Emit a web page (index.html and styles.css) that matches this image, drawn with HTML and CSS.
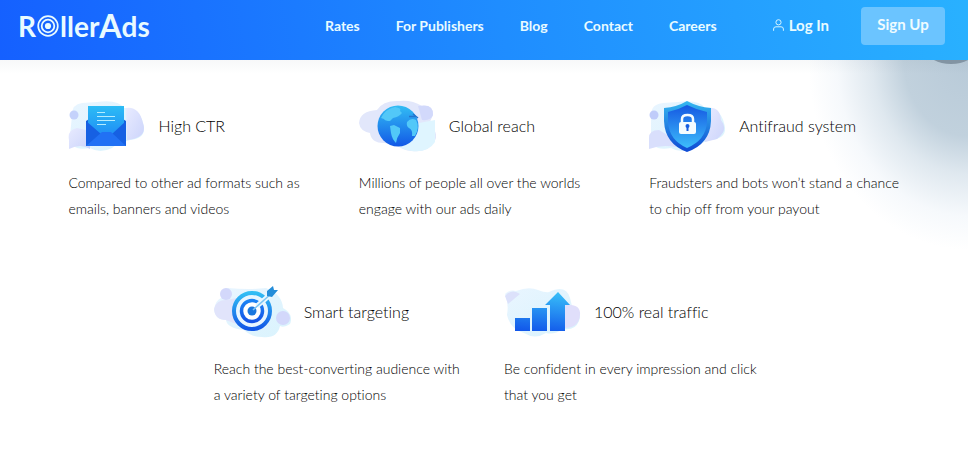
FILE: index.html
```html
<!DOCTYPE html>
<html lang="en">
<head>
<meta charset="utf-8">
<title>RollerAds</title>
<link rel="stylesheet" href="styles.css">
</head>
<body>
<header class="header">
  <a class="logo" href="#" aria-label="RollerAds">
    <span>R</span>
    <svg class="logo-mark" viewBox="0 0 22 22" aria-hidden="true">
      <g fill="none" stroke="#e9fbff"><circle cx="11" cy="11" r="9.8" stroke-width="1.7"/><circle cx="11" cy="11" r="6.3" stroke-width="1.8"/></g>
      <circle cx="11" cy="11" r="3.1" fill="#e9fbff"/>
    </svg>
    <span>ller</span><span class="logo-a">A</span><span>ds</span>
  </a>
  <nav class="nav">
    <a href="#">Rates</a>
    <a href="#">For Publishers</a>
    <a href="#">Blog</a>
    <a href="#">Contact</a>
    <a href="#">Careers</a>
  </nav>
  <div class="account">
    <a class="login" href="#">
      <svg class="user" viewBox="0 0 11 12" aria-hidden="true"><g fill="none" stroke="#d5f5ff" stroke-width="1"><circle cx="5.5" cy="3.3" r="2.6"/><path d="M.6 11.8V10Q.6 7.8 3 7.8H8Q10.4 7.8 10.4 10V11.8"/></g></svg>
      Log In
    </a>
    <button class="signup" type="button">Sign Up</button>
  </div>
</header>
<main class="main">
  <svg class="orb" viewBox="0 0 34 5" aria-hidden="true"><path d="M0 0Q7 4 17 4T34 0Z" fill="#8294a3"/></svg>
  <section class="features">
    <article class="feature">
      <div class="feature-head">
        <svg class="icon" viewBox="0 0 77 52" aria-hidden="true">
          <defs>
            <linearGradient id="sky" x1="0" y1="0" x2="0" y2="1"><stop offset="0" stop-color="#32bdf4"/><stop offset="1" stop-color="#1258e6"/></linearGradient>
            <linearGradient id="paper" x1="0" y1="0" x2="0" y2="1"><stop offset="0" stop-color="#2cbcf5"/><stop offset="1" stop-color="#1e8af5"/></linearGradient>
            <linearGradient id="bars" gradientUnits="userSpaceOnUse" x1="40" y1="6" x2="36" y2="46"><stop offset="0" stop-color="#37bdf8"/><stop offset="1" stop-color="#1258ea"/></linearGradient>
            <linearGradient id="deep" x1="0" y1="0" x2="0" y2="1"><stop offset="0" stop-color="#1a83f5"/><stop offset="1" stop-color="#1454e6"/></linearGradient>
            <linearGradient id="shield" x1="0" y1="0" x2="0" y2="1"><stop offset="0" stop-color="#1558e2"/><stop offset="1" stop-color="#3dbdfb"/></linearGradient>
            <linearGradient id="rim" x1="0" y1="0" x2="0" y2="1"><stop offset="0" stop-color="#35b8ef"/><stop offset="1" stop-color="#0f49d4"/></linearGradient>
            <linearGradient id="lilac" x1="0" y1="0" x2="1" y2="1"><stop offset="0" stop-color="#e8ebff"/><stop offset="1" stop-color="#ccd4fb"/></linearGradient>
            <linearGradient id="mist" x1="0" y1="0" x2="1" y2="1"><stop offset="0" stop-color="#e9f5ff"/><stop offset="1" stop-color="#d9f3fd"/></linearGradient>
          </defs>
          <path d="M4 15Q4 4 14 3L29 2Q50 -1 56 8Q71 7 75 23Q80 38 62 40Q50 43 44 48Q32 54 22 48Q2 52 2 36Z" fill="url(#mist)"/>
          <path d="M58 8Q71 6 75 23Q80 38 59 40Z" fill="url(#lilac)"/>
          <path d="M1 40Q-1 30 9 28L22 31V49Q13 43 1 49Z" fill="url(#lilac)"/>
          <circle cx="6" cy="15" r="4.5" fill="#c4d2fb"/>
          <path d="M18 21 21 19H55L58 21V46H18Z" fill="#1764db"/>
          <path d="M20 6H56V38H20Z" fill="url(#paper)"/>
          <path d="M18 21 33 34 18 46Z" fill="#1660e3"/><path d="M58 21 44 34 58 46Z" fill="#1660e3"/>
          <path d="M18 46 34 32H43L58 46Z" fill="#2171f4"/>
          <path d="M29 12.5H37M29 16.500H47M29 20.500H47M29 24.500H38" fill="none" stroke="#b4ecff"/>
        </svg>
        <h2>High CTR</h2>
      </div>
      <p>Compared to other ad formats such as emails, banners and videos</p>
    </article>
    <article class="feature">
      <div class="feature-head">
        <svg class="icon" viewBox="0 0 77 52" aria-hidden="true">
          <path d="M0 23Q1 11 18 10Q24 0 41 1Q53 0 63 6Q74 4 74 15L70 24Q82 35 74 43Q68 53 52 51Q43 50 36 44L25 43Q12 43 11 33Q1 31 0 23Z" fill="#e2e7fb"/>
          <path d="M60 23 76 20V42Q69 53 53 51Q41 50 36 42Z" fill="#dff5ff"/>
          <path d="M59 6Q75 3 74 15Q72 21 63 20Z" fill="#d2d9fb"/>
          <circle cx="39" cy="26" r="20.5" fill="url(#sky)"/>
          <path d="M22 18Q26 9 36 7Q43 8 41 11L43 13Q40 17 34 18L31 21Q26 21 25 19ZM31 26 35 25 41 28 41 33Q38 37 37 43Q33 39 32 33ZM48 22Q52 17 57 20Q61 27 56 36L53 36Q54 30 50 28Q47 26 48 22Z" fill="#52c8f8"/>
          <path d="M50 16.500H57M54 14 59 18" stroke="#2474ce" stroke-width="1.500"/>
        </svg>
        <h2>Global reach</h2>
      </div>
      <p>Millions of people all over the worlds engage with our ads daily</p>
    </article>
    <article class="feature">
      <div class="feature-head">
        <svg class="icon" viewBox="0 0 77 52" aria-hidden="true">
          <path d="M2 15Q2 4 14 3L29 2Q50 -1 56 8Q71 7 75 23Q80 38 62 40Q50 43 44 48Q32 54 22 48Q2 52 2 36Z" fill="url(#mist)"/>
          <path d="M58 8Q71 6 72 20Q80 30 68 39L56 42Z" fill="url(#lilac)"/>
          <path d="M0 49V38Q0 30 10 30L27 40V47Q13 44 0 49Z" fill="#d9dffc"/>
          <circle cx="5" cy="15" r="4.5" fill="#bfccfa"/>
          <path d="M38 1Q49 7 62 8V21Q61 44 38 52Q16 44 15 21V8Q28 7 38 1Z" fill="url(#rim)"/>
          <path d="M38 5Q48 10 58 12V22Q57 40 38 48Q20 40 19 22V12Q29 10 38 5Z" fill="url(#shield)"/>
          <path d="M33 23V19Q33 15 38.500 15T44 19V23" fill="none" stroke="#f4fcff" stroke-width="2.500"/>
          <rect x="30" y="22" width="17" height="12" rx="2" fill="#f4fcff"/>
          <circle cx="38.500" cy="26" r="2" fill="#175ee0"/><path d="M38.500 26V31" stroke="#175ee0" stroke-width="2"/>
        </svg>
        <h2>Antifraud system</h2>
      </div>
      <p>Fraudsters and bots won’t stand a chance to chip off from your payout</p>
    </article>
    <article class="feature">
      <div class="feature-head">
        <svg class="icon" viewBox="0 0 77 52" aria-hidden="true">
          <path d="M0 23Q2 14 7 12Q5 4 14 2Q35 4 52 2Q68 8 69 22Q80 28 76 38Q70 42 66 40Q63 53 48 51Q37 51 30 44Q13 42 12 34Q1 34 0 23Z" fill="url(#mist)"/>
          <path d="M0 23Q2 14 12 14L23 12V38Q14 35 12 34Q1 34 0 23Z" fill="#e1e4fb"/>
          <circle cx="12" cy="8" r="6" fill="#d3d8fb"/><circle cx="69" cy="32" r="7" fill="#d3d8fb"/>
          <circle cx="38" cy="25" r="18" fill="#e8f6ff" stroke="url(#sky)" stroke-width="4"/>
          <circle cx="38" cy="25" r="10.500" fill="#fff" stroke="url(#deep)" stroke-width="3.500"/>
          <circle cx="38" cy="25" r="4.500" fill="#1b78df"/>
          <path d="M43 20 57 8" stroke="#e8f8ff" stroke-width="5"/><path d="M39 24 58 7" stroke="#7cc4f2" stroke-width="1.500"/>
          <path d="M53 10V5L59 0 60 4 64 4 58 11Z" fill="#248dd9"/>
        </svg>
        <h2>Smart targeting</h2>
      </div>
      <p>Reach the best-converting audience with a variety of targeting options</p>
    </article>
    <article class="feature">
      <div class="feature-head">
        <svg class="icon" viewBox="0 0 77 52" aria-hidden="true">
          <path d="M1 8Q6 3 12 5Q25 0 34 4Q42 7 45 6Q62 -2 66 12L68 20Q79 25 75 35Q71 45 59 43Q50 49 42 47Q31 54 20 47Q6 43 3 29Q5 18 1 8Z" fill="url(#mist)"/>
          <path d="M60 19Q77 17 76 29Q75 43 58 42Z" fill="#e0dffb"/><path d="M1 10Q8 2 16 8L4 18Z" fill="#dce1fb"/>
          <path d="M11 32H26V45H11ZM28 22H43V45H28ZM46 19H41L54 6 66 19H61V45H46Z" fill="url(#bars)"/>
        </svg>
        <h2>100% real traffic</h2>
      </div>
      <p>Be confident in every impression and click that you get</p>
    </article>
  </section>
</main>
</body>
</html>
```
FILE: styles.css
```css
* { box-sizing: border-box; }
body {
  margin: 0;
  background: #fff;
  color: #000;
  font-family: Lato, "Liberation Sans", sans-serif;
  font-variant-ligatures: none;
}
a { color: inherit; text-decoration: none; }
.header {
  display: flex;
  align-items: center;
  height: 60px;
  padding: 0 23px 8px 18px;
  background: linear-gradient(80deg, #1560ff, #1f8dff 52%, #29b1ff);
  color: #e9fbff;
  font-weight: 700;
}
.logo {
  display: flex;
  align-items: center;
  color: #e9fbff;
  font-size: 28px;
  line-height: 32px;
}
.logo-mark { width: 22px; height: 22px; margin: 0 1px; }
.logo-a { font-size: 32px; }
.nav {
  display: flex;
  gap: 36px;
  margin-left: auto;
  padding-bottom: 2px;
  font-size: 14px;
}
.account {
  display: flex;
  align-items: center;
  gap: 32px;
  margin-left: 56px;
}
.login {
  display: flex;
  align-items: center;
  gap: 5px;
  padding-bottom: 2px;
  font-size: 15px;
}
.user { width: 11px; height: 12px; }
.signup {
  width: 84px;
  height: 38px;
  padding: 0 0 4px;
  border: 0;
  border-radius: 4px;
  background: #6bc4ff;
  color: #f0fcff;
  font: inherit;
  font-size: 15px;
}
.main {
  position: relative;
  padding: 40px 0 32px;
  background:
    linear-gradient(#f7f8f9, transparent 14px),
    radial-gradient(ellipse 160px 190px at 100% 0, #b8cad8, #c1d1dd 40%, #dfe8ef 60%, #f6f9fc 82%, #fff);
  background-repeat: no-repeat;
  background-blend-mode: multiply;
}
.orb {
  position: absolute;
  top: 0;
  right: 0;
  width: 34px;
  height: 5px;
}
.features {
  display: flex;
  flex-wrap: wrap;
  justify-content: center;
  row-gap: 64px;
  width: 90%;
  margin: 0 auto;
}
.feature { width: 33.33%; padding: 0 16px 0 20px; }
.feature-head { display: flex; align-items: center; gap: 13px; }
.icon { flex: none; width: 77px; height: 52px; }
.feature h2 { margin: 0; padding-bottom: 2px; font-size: 16px; font-weight: 300; }
.feature p { margin: 18px 0 0; font-size: 14px; font-weight: 300; line-height: 26px; }
```
